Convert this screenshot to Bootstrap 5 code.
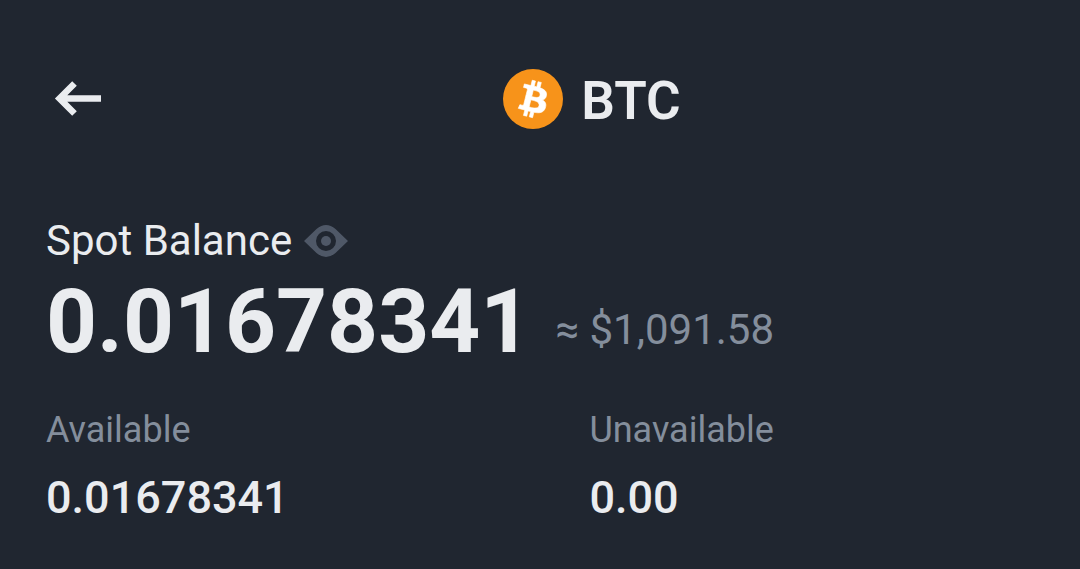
<!DOCTYPE html>
<html lang="en">
<head>
<meta charset="utf-8">
<meta name="viewport" content="width=device-width, initial-scale=1">
<title>BTC Spot Balance</title>
<link href="https://cdn.jsdelivr.net/npm/bootstrap@5.3.0/dist/css/bootstrap.min.css" rel="stylesheet">
<style>
  body { background: #202630; color: #eaecef; font-family: Roboto, "Noto Sans", sans-serif; }
  .page-head { padding: 64px 0 0 46px; }
  .back-btn { width: 56px; height: 70px; color: inherit; }
  .coin-title { font-size: 53px; line-height: 66px; font-weight: 600; padding-top: 4px; }
  .balance { padding: 80px 46px 0; }
  .balance-label { font-size: 42px; line-height: 54px; }
  .balance-total { font-size: 89px; line-height: 108px; font-weight: 700; }
  .balance-fiat { font-size: 42px; line-height: 56px; padding-top: 16px; }
  .quiet { color: #848e9c; }
  .eye-btn { color: #4f5867; margin-left: 10px; }
  .split { margin-top: 30px; }
  .split-first { flex: 0 0 55%; }
  .split-label { font-size: 36px; line-height: 48px; font-weight: 400; }
  .split-value { font-size: 45px; line-height: 56px; font-weight: 500; margin-top: 16px; }
</style>
</head>
<body>
<header class="page-head d-flex align-items-center">
  <button type="button" class="back-btn btn border-0 p-0 d-flex align-items-center" aria-label="Back">
    <svg class="ms-2" width="48" height="40" viewBox="0 0 48 40" fill="none" stroke="currentColor" stroke-width="6.500" aria-hidden="true">
      <path d="M20.500 4.500 5.500 19.500 20.500 34.500M5.500 19.500H47"/>
    </svg>
  </button>
  <div class="flex-grow-1 d-flex align-items-center justify-content-center gap-3">
    <svg width="64" height="64" viewBox="0 0 64 64" aria-hidden="true">
      <circle cx="32" cy="32" r="30" fill="#f7931a"/>
      <path fill="#fff" stroke="#fff" stroke-width=".35" transform="translate(2 2) scale(1.875)" d="M23.189 14.020c.314-2.096-1.283-3.223-3.465-3.975l.708-2.840-1.728-.430-.690 2.765c-.454-.114-.920-.220-1.385-.326l.695-2.783L15.596 6l-.708 2.839c-.376-.086-.746-.170-1.104-.260l.002-.009-2.384-.595-.460 1.846s1.283.294 1.256.312c.700.175.826.638.805 1.006l-.806 3.235c.048.012.110.030.180.057l-.183-.045-1.130 4.532c-.086.212-.303.531-.793.410.018.025-1.256-.313-1.256-.313l-.858 1.978 2.250.561c.418.105.828.215 1.231.318l-.715 2.872 1.727.430.708-2.840c.472.127.930.245 1.378.357l-.706 2.828 1.728.430.715-2.866c2.948.558 5.164.333 6.097-2.333.752-2.146-.037-3.385-1.588-4.192 1.130-.260 1.980-1.003 2.207-2.538zm-3.950 5.538c-.533 2.147-4.148.986-5.320.695l.950-3.805c1.172.293 4.929.872 4.370 3.110zm.535-5.569c-.487 1.953-3.495.960-4.470.717l.860-3.450c.975.243 4.118.696 3.610 2.733z"/>
    </svg>
    <h1 class="coin-title mb-0">BTC</h1>
  </div>
</header>
<main class="balance">
  <div class="d-flex align-items-center">
    <h2 class="balance-label fw-normal m-0">Spot Balance</h2>
    <button type="button" class="eye-btn btn border-0 p-0 d-flex" aria-label="Hide balance">
      <svg width="48" height="36" viewBox="0 0 48 36" aria-hidden="true">
        <path fill="currentColor" fill-rule="evenodd" d="M2 18 14.500 6Q24 -2 33.500 6L46 18 33.500 30Q24 38 14.500 30ZM24 8a10 10 0 1 0 0 20a10 10 0 1 0 0-20Z"/>
        <circle cx="24" cy="18" r="5" fill="currentColor"/>
      </svg>
    </button>
  </div>
  <div class="d-flex align-items-center flex-wrap">
    <div class="balance-total me-4">0.01678341</div>
    <div class="balance-fiat quiet">≈ $1,091.58</div>
  </div>
  <dl class="split d-flex mb-0">
    <div class="split-first">
      <dt class="split-label quiet">Available</dt>
      <dd class="split-value mb-0">0.01678341</dd>
    </div>
    <div>
      <dt class="split-label quiet">Unavailable</dt>
      <dd class="split-value mb-0">0.00</dd>
    </div>
  </dl>
</main>
<script src="https://cdn.jsdelivr.net/npm/bootstrap@5.3.0/dist/js/bootstrap.bundle.min.js"></script>
</body>
</html>
